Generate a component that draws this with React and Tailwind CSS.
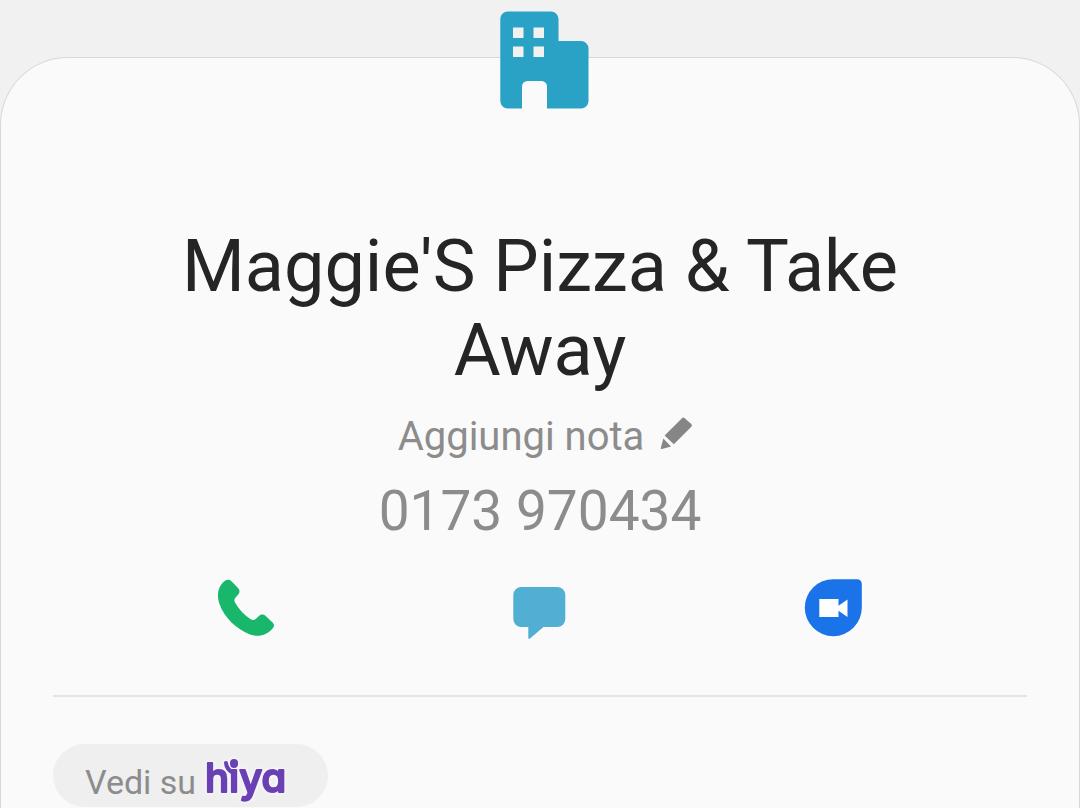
function BuildingIcon() {
  return (
    <svg className="size-[98px]" viewBox="0 0 98 98" aria-hidden="true">
      <path
        fill="#29a2c6"
        d="M17 .5H60a7.500 7.500 0 0 1 7.500 7.500V30H90a7.500 7.500 0 0 1 7.500 7.500V90a7.500 7.500 0 0 1-7.500 7.500H56V75.500a5.500 5.500 0 0 0-5.500-5.500H36.500a5.500 5.500 0 0 0-5.500 5.500V97.500H17A7.500 7.500 0 0 1 9.300 90V8A7.500 7.500 0 0 1 17 .5Z"
      />
      <path fill="#f1f1f1" d="M22 16.500h10.500V27H22ZM42.500 16.500H53V27H42.500ZM22 35.500h10.500V46H22ZM42.500 35.500H53V46H42.500Z" />
    </svg>
  );
}

function PencilIcon() {
  return (
    <svg className="mt-1 size-8" viewBox="0 0 32 32" fill="#868686" aria-hidden="true">
      <path d="M22 1.200Q23.300 0 24.700 1.200L31.300 7Q32.500 8.300 31.300 9.800L13.800 27.300 4.600 18.600Z" />
      <path d="M3.300 21.500 11 29.500 2 32Q.6 32.200.8 31Z" />
    </svg>
  );
}

function PhoneIcon() {
  return (
    <svg className="h-16 w-[60px]" viewBox="0 0 60 64" aria-hidden="true">
      <path
        fill="#18b76b"
        d="M7.500 6C10.500 3 13.500 3.200 15.700 5.400L21.800 11.800C24 14.200 24 16.500 22 18.700L19.800 21.200C18.300 22.800 17.900 24.200 19 26.500C23 33.500 28.500 39 34.300 43C36.500 44.500 38.300 44.500 40 42.800L42.600 40.200C44.800 38 47.500 38 49.700 40L56.300 46.200C58.500 48.400 58.400 50.400 56.800 52.200C51 59 43 61.500 34 58.500C21 53.500 8.500 42 3.500 28C.5 19 1.800 11.500 7.500 6Z"
      />
    </svg>
  );
}

function ChatIcon() {
  return (
    <svg className="h-16 w-[60px]" viewBox="0 0 60 64" aria-hidden="true">
      <path
        fill="#52afd4"
        d="M11.300 11H47.300A8 8 0 0 1 55.300 19V43A8 8 0 0 1 47.300 51H33.500L20 62.600Q18.300 63.600 18.300 61.800V51H11.300A8 8 0 0 1 3.300 43V19A8 8 0 0 1 11.300 11Z"
      />
    </svg>
  );
}

function VideoIcon() {
  return (
    <svg className="h-16 w-[60px]" viewBox="1 0 60 64" aria-hidden="true">
      <path fill="#1a73e8" d="M30.300 3.200H54A4.800 4.800 0 0 1 58.800 8V31.700A28.500 28.500 0 1 1 30.300 3.200Z" />
      <path fill="#fff" d="M16.300 23H35.500V29.800L44.500 23.500V41L35.500 34.800V41H16.300Z" />
    </svg>
  );
}

function HiyaLogo() {
  return (
    <svg className="h-[52px] w-[88px] overflow-visible drop-shadow-[0_0_2px_#ffffff]" viewBox="0 0 88 52" role="img" aria-label="hiya">
      <text
        x="1"
        y="38"
        className="fill-[#6a40b5] stroke-[#6a40b5] stroke-2 font-['Inter',sans-serif] text-[40px] font-medium [font-feature-settings:'cv11'] [stroke-linejoin:round]"
      >
        hiya
      </text>
      <circle cx="30" cy="9" r="4" fill="#6a40b5" />
      <path d="M22 9Q22.500 15 29 19" fill="none" stroke="#6a40b5" strokeWidth="4" strokeLinecap="round" />
    </svg>
  );
}

const actions = [
  { label: "Chiama", Icon: PhoneIcon },
  { label: "Messaggio", Icon: ChatIcon },
  { label: "Videochiamata", Icon: VideoIcon },
];

export default function App() {
  return (
    <div className="min-h-screen bg-[#f1f1f1] pt-[57px] font-['Roboto',sans-serif]">
      <main className="flex min-h-[calc(100vh-57px)] flex-col items-center rounded-t-[68px] border border-b-0 border-[#d8d8d8] bg-[#fafafa] px-[52px]">
        <div className="-mt-[47px]">
          <BuildingIcon />
        </div>
        <h1 className="mt-[116px] max-w-[840px] text-center text-[72px] leading-[84px] text-[#252525]">
          Maggie'S Pizza &amp; Take Away
        </h1>
        <button type="button" className="mt-5 flex items-start gap-4 pl-2.5 text-[40px] leading-[48px] text-[#8c8c8c]">
          Aggiungi nota
          <PencilIcon />
        </button>
        <p className="mt-[18px] text-[55px] leading-[64px] text-[#8c8c8c]">0173 970434</p>
        <div className="mt-[33px] grid w-full grid-cols-3 px-[46px]">
          {actions.map(({ label, Icon }) => (
            <button key={label} type="button" aria-label={label} className="justify-self-center">
              <Icon />
            </button>
          ))}
        </div>
        <hr className="mt-[55px] w-full border-t-2 border-[#e4e4e4]" />
        <a
          href="#hiya"
          className="mt-[47px] flex h-[63px] items-center self-start rounded-full bg-[#efefef] pr-9 pl-8 text-[34px] leading-[42px] text-[#8c8c8c]"
        >
          <span className="pt-3">Vedi su</span>
          <span className="ml-2 pt-2">
            <HiyaLogo />
          </span>
        </a>
      </main>
    </div>
  );
}
